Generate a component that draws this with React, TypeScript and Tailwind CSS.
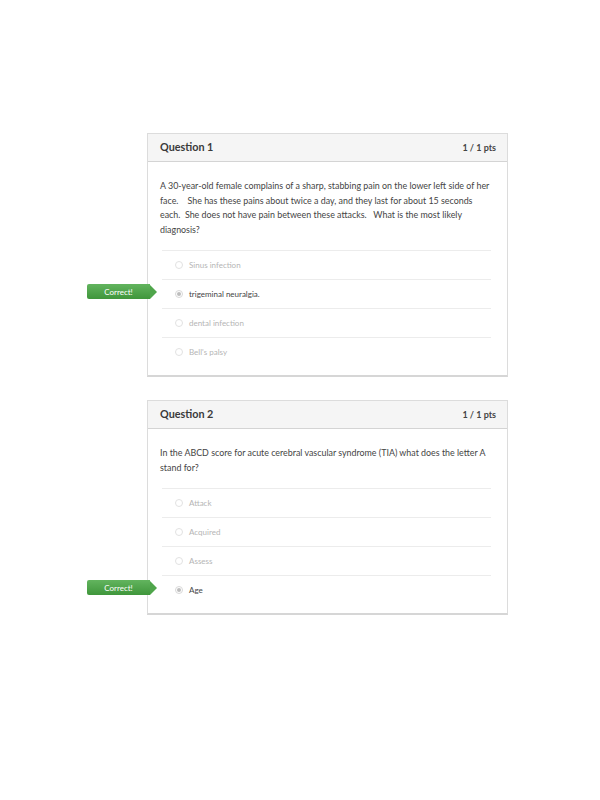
import React from 'react'

type Answer = { text: string; selected?: boolean }
type Question = { title: string; pts: string; body: string[]; answers: Answer[] }

const questions: Question[] = [
  {
    title: 'Question 1',
    pts: '1 / 1 pts',
    body: [
      'A 30-year-old female complains of a sharp, stabbing pain on the lower left side of her',
      'face.\u00a0\u00a0\u00a0 She has these pains about twice a day, and they last for about 15 seconds',
      'each.\u00a0 She does not have pain between these attacks.\u00a0\u00a0 What is the most likely',
      'diagnosis?',
    ],
    answers: [
      { text: 'Sinus infection' },
      { text: 'trigeminal neuralgia.', selected: true },
      { text: 'dental infection' },
      { text: "Bell's palsy" },
    ],
  },
  {
    title: 'Question 2',
    pts: '1 / 1 pts',
    body: [
      'In the ABCD score for acute cerebral vascular syndrome (TIA) what does the letter A',
      'stand for?',
    ],
    answers: [
      { text: 'Attack' },
      { text: 'Acquired' },
      { text: 'Assess' },
      { text: 'Age', selected: true },
    ],
  },
]

function CorrectTag() {
  return (
    <div className="absolute left-[-75px] top-[4px] flex items-center">
      <div className="h-[15px] w-[63px] rounded-l-[2px] bg-gradient-to-b from-[#62b45e] to-[#3f963b] flex items-center justify-center text-white text-[8px] leading-none">
        Correct!
      </div>
      <div className="w-0 h-0 border-y-[7.5px] border-y-transparent border-l-[7px] border-l-[#4fa54b]" />
    </div>
  )
}

function AnswerRow({ a }: { a: Answer }) {
  return (
    <div className="relative h-[29px] border-t border-[#ececec] flex items-center pl-[13px]">
      {a.selected && <CorrectTag />}
      <span
        className={
          'w-[8px] h-[8px] rounded-full border flex items-center justify-center ' +
          (a.selected ? 'border-[#d8d8d8]' : 'border-[#e2e2e2]')
        }
      >
        {a.selected && <span className="w-[4px] h-[4px] rounded-full bg-[#bdbdbd]" />}
      </span>
      <span
        className={
          'ml-[6px] text-[8px] ' + (a.selected ? 'text-[#444]' : 'text-[#b5b5b5]')
        }
      >
        {a.text}
      </span>
    </div>
  )
}

function QuestionCard({ q }: { q: Question }) {
  return (
    <div className="w-[361px] border border-[#dcdcdc] border-b-2 border-b-[#d6d6d6] bg-white">
      <div className="h-[28px] bg-[#f5f5f5] border-b border-[#d4d4d4] flex items-center justify-between pl-[12px] pr-[11px]">
        <span className="text-[10.8px] font-bold text-[#3a3a3a]">{q.title}</span>
        <span className="text-[9px] font-bold text-[#444]">{q.pts}</span>
      </div>
      <div className="pt-[17px] pb-[9px] pl-[12px] pr-[10px]">
        <div className="text-[8.9px] leading-[14.5px] text-[#444]">
          {q.body.map((l, i) => (
            <div key={i} className="whitespace-pre">{l}</div>
          ))}
        </div>
        <div className="mt-[13px] ml-[2px] mr-[6px]">
          {q.answers.map((a, i) => (
            <AnswerRow key={i} a={a} />
          ))}
        </div>
      </div>
    </div>
  )
}

export default function App() {
  return (
    <div
      className="min-h-[800px] w-[600px] bg-white pt-[133px] pl-[147px]"
      style={{ fontFamily: 'Lato, "Open Sans", sans-serif' }}
    >
      <div className="flex flex-col gap-[23px]">
        {questions.map((q, i) => (
          <QuestionCard key={i} q={q} />
        ))}
      </div>
    </div>
  )
}
